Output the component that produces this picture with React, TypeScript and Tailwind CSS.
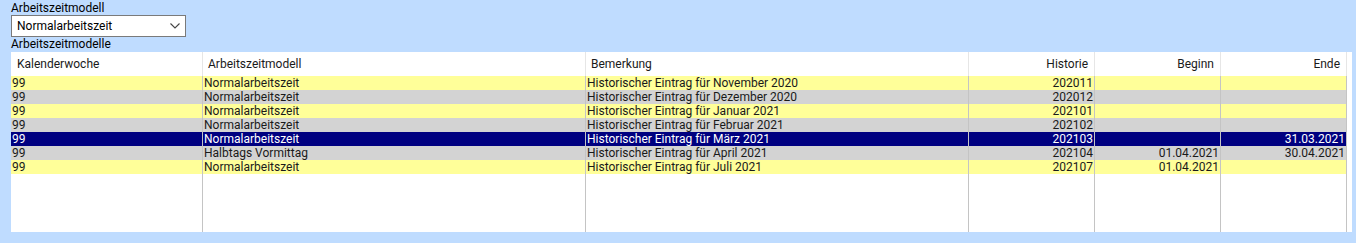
import type { JSX } from 'react';

type Row = {
  kw: string;
  modell: string;
  bemerkung: string;
  historie: string;
  beginn: string;
  ende: string;
  tone: 'yellow' | 'gray' | 'selected';
};

const rows: Row[] = [
  { kw: '99', modell: 'Normalarbeitszeit', bemerkung: 'Historischer Eintrag für November 2020', historie: '202011', beginn: '', ende: '', tone: 'yellow' },
  { kw: '99', modell: 'Normalarbeitszeit', bemerkung: 'Historischer Eintrag für Dezember 2020', historie: '202012', beginn: '', ende: '', tone: 'gray' },
  { kw: '99', modell: 'Normalarbeitszeit', bemerkung: 'Historischer Eintrag für Januar 2021', historie: '202101', beginn: '', ende: '', tone: 'yellow' },
  { kw: '99', modell: 'Normalarbeitszeit', bemerkung: 'Historischer Eintrag für Februar 2021', historie: '202102', beginn: '', ende: '', tone: 'gray' },
  { kw: '99', modell: 'Normalarbeitszeit', bemerkung: 'Historischer Eintrag für März 2021', historie: '202103', beginn: '', ende: '31.03.2021', tone: 'selected' },
  { kw: '99', modell: 'Halbtags Vormittag', bemerkung: 'Historischer Eintrag für April 2021', historie: '202104', beginn: '01.04.2021', ende: '30.04.2021', tone: 'gray' },
  { kw: '99', modell: 'Normalarbeitszeit', bemerkung: 'Historischer Eintrag für Juli 2021', historie: '202107', beginn: '01.04.2021', ende: '', tone: 'yellow' },
];

const toneClass = {
  yellow: 'bg-[#ffff99] text-[#1a1a1a]',
  gray: 'bg-[#d3d3d3] text-[#1a1a1a]',
  selected: 'bg-[#000080] text-white',
};

export default function App(): JSX.Element {
  return (
    <main
      className="w-[1356px] h-[243px] bg-[#bfdcff] px-[11px] pt-[2px] text-[12px] text-black overflow-hidden"
      style={{ fontFamily: 'Roboto, "Liberation Sans", sans-serif' }}
    >
      <div className="h-[13px] leading-[13px]">Arbeitszeitmodell</div>

      {/* Auswahl */}
      <div className="w-[175px] h-[22px] bg-white border border-[#7a7a7a] flex items-center pl-[5px] pr-[4px]">
        <span className="flex-1 leading-[14px]">Normalarbeitszeit</span>
        <svg width="10" height="6" viewBox="0 0 10 6" className="mr-[1px]">
          <path d="M0.5 0.5 L5 5 L9.5 0.5" fill="none" stroke="#444" strokeWidth="1.1" />
        </svg>
      </div>

      <div className="h-[15px] leading-[15px]">Arbeitszeitmodelle</div>

      {/* Tabelle */}
      <div className="w-[1341px] h-[180px] bg-white flex flex-col">
        <div className="h-[24px] flex items-center text-[#1a1a1a]">
          <div className="w-[191px] h-full flex items-center pl-[6px]">Kalenderwoche</div>
          <div className="w-[383px] h-full flex items-center pl-[5px] border-l border-[#e6e6e6]">Arbeitszeitmodell</div>
          <div className="w-[383px] h-full flex items-center pl-[5px] border-l border-[#e6e6e6]">Bemerkung</div>
          <div className="w-[126px] h-full flex items-center justify-end pr-[6px] border-l border-[#e6e6e6]">Historie</div>
          <div className="w-[126px] h-full flex items-center justify-end pr-[6px] border-l border-[#e6e6e6]">Beginn</div>
          <div className="w-[126px] h-full flex items-center justify-end pr-[6px] border-l border-[#e6e6e6]">Ende</div>
          <div className="w-[6px] h-full border-l border-[#e6e6e6]" />
        </div>

        {rows.map((r, i) => (
          <div key={i} className={`h-[14px] flex leading-[14px] whitespace-nowrap overflow-hidden ${toneClass[r.tone]}`}>
            <div className="w-[191px] pl-[1px]">{r.kw}</div>
            <div className="w-[383px] pl-[1px] border-l border-[#c4c4c4]">{r.modell}</div>
            <div className="w-[383px] pl-[1px] border-l border-[#c4c4c4]">{r.bemerkung}</div>
            <div className="w-[126px] pr-[1px] text-right border-l border-[#c4c4c4]">{r.historie}</div>
            <div className="w-[126px] pr-[1px] text-right border-l border-[#c4c4c4]">{r.beginn}</div>
            <div className="w-[126px] pr-[1px] text-right border-l border-[#c4c4c4]">{r.ende}</div>
            <div className="w-[6px] border-l border-[#c4c4c4] bg-white" />
          </div>
        ))}

        <div className="flex-1 flex">
          <div className="w-[191px]" />
          <div className="w-[383px] border-l border-[#c4c4c4]" />
          <div className="w-[383px] border-l border-[#c4c4c4]" />
          <div className="w-[126px] border-l border-[#c4c4c4]" />
          <div className="w-[126px] border-l border-[#c4c4c4]" />
          <div className="w-[126px] border-l border-[#c4c4c4]" />
          <div className="w-[6px] border-l border-[#c4c4c4]" />
        </div>
      </div>
    </main>
  );
}
